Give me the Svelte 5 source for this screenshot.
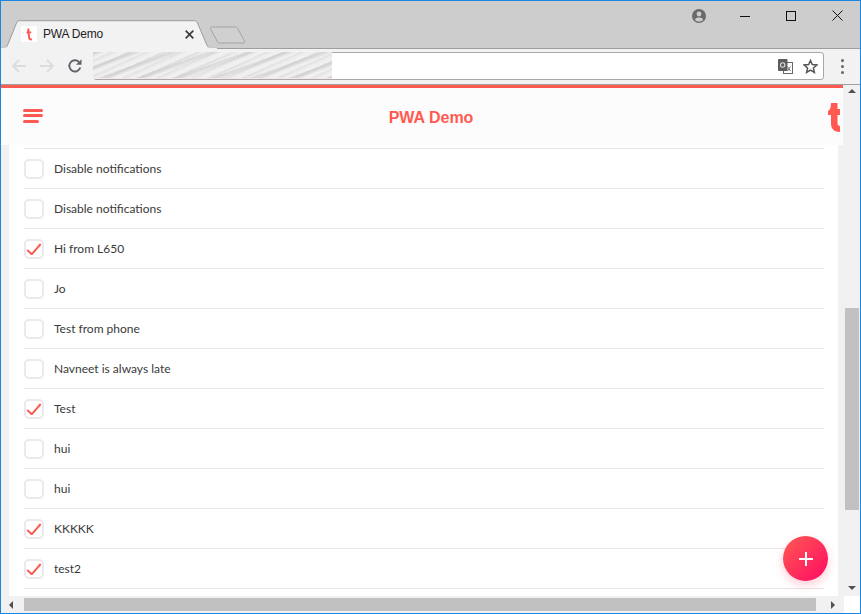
<script>
  const items = [
    ['Disable notifications', false],
    ['Disable notifications', false],
    ['Hi from L650', true],
    ['Jo', false],
    ['Test from phone', false],
    ['Navneet is always late', false],
    ['Test', true],
    ['hui', false],
    ['hui', false],
    ['KKKKK', true],
    ['test2', true]
  ];
</script>

<div class="window">
  <div class="titlebar">
    <div class="tab">
      <svg class="tab-shape" width="216" height="30" viewBox="0 0 216 30">
        <path d="M0 28.500h3.500c1.500 0 2.400-.8 3-2.200L15.500 4c.6-1.500 1.500-2.300 3-2.300h175c1.500 0 2.400.8 3 2.300l9.500 22.300c.6 1.400 1.500 2.200 3 2.200H216V30H0z" fill="#f2f2f2" stroke="#9c9c9c" stroke-width="1"/>
        <rect x="0" y="28.500" width="216" height="2" fill="#f2f2f2"/>
      </svg>
      <span class="favicon"><svg width="16" height="16" viewBox="0 0 16 16"><rect width="16" height="16" fill="#fff"/><path d="M6.500 2.500h1.800l.2 3h1.700v1.800H8.700l.4 4c.1 1 .8 1.300 1.800 1.200l.4 1.800c-2.400.4-3.900-.3-4.200-2.800L6.500 7.300H5.500v-1C6.300 5.400 6.500 4 6.500 2.500z" fill="#ff5a52"/></svg></span>
      <span class="tab-title">PWA Demo</span>
      <svg class="tab-x" width="9" height="9" viewBox="0 0 9 9"><path d="M.7.700l7.600 7.600M8.300.700L.7 8.300" stroke="#3c3c3c" stroke-width="1.700" fill="none"/></svg>
    </div>
    <svg class="newtab" width="36" height="18" viewBox="0 0 36 18"><path d="M1.500 1h24c1 0 1.500.4 2 1.200l7 13c.5 1 0 1.800-1 1.800h-24c-1 0-1.500-.4-2-1.200l-7-13C0 1.800.5 1 1.500 1z" fill="#d0d0d0" stroke="#a3a3a3"/></svg>
    <div class="spacer"></div>
    <svg class="profile" width="14" height="14" viewBox="0 0 14 14"><circle cx="7" cy="7" r="7" fill="#6a6a6a"/><circle cx="7" cy="5" r="2.400" fill="#cdcdcd"/><path d="M2.800 10.700C3.600 9 5.300 8.500 7 8.500s3.400.5 4.200 2.200C10.200 11.800 8.700 12.500 7 12.500s-3.200-.7-4.200-1.800z" fill="#cdcdcd"/></svg>
    <div class="winbtns">
      <svg width="10" height="10" viewBox="0 0 10 10"><path d="M0 5.500h10" stroke="#111" fill="none"/></svg>
      <svg width="10" height="10" viewBox="0 0 10 10"><rect x=".5" y=".5" width="9" height="9" stroke="#111" fill="none"/></svg>
      <svg width="11" height="11" viewBox="0 0 11 11"><path d="M.5.500l10 10M10.500.500l-10 10" stroke="#111" fill="none"/></svg>
    </div>
  </div>

  <div class="toolbar">
    <svg class="nav" width="16" height="16" viewBox="0 0 16 16"><path d="M15 8H2M8 2L2 8l6 6" stroke="#dcdcdc" stroke-width="1.800" fill="none"/></svg>
    <svg class="nav" width="16" height="16" viewBox="0 0 16 16"><path d="M1 8h13M8 2l6 6-6 6" stroke="#dcdcdc" stroke-width="1.800" fill="none"/></svg>
    <svg class="nav" width="16" height="16" viewBox="0 0 16 16"><path d="M13.300 9.500A5.600 5.600 0 1 1 12 4" stroke="#5f6368" stroke-width="1.900" fill="none"/><path d="M14.500 1.200v5.600H9z" fill="#5f6368"/></svg>
    <div class="omnibox">
      <div class="blur"><div class="streaks"></div></div>
      <div class="spacer"></div>
      <svg width="15" height="15" viewBox="0 0 15 15"><rect x="5.500" y="3.500" width="9" height="11" fill="#fff" stroke="#666" stroke-width="1"/><rect x="0" y="0" width="9.500" height="12" rx="1" fill="#5c5c5c"/><circle cx="4.700" cy="6" r="2.200" fill="none" stroke="#ddd" stroke-width="1.100"/><path d="M9.500 7.500l3 4.500M12.500 7.500L9.500 12" stroke="#777" stroke-width="1" fill="none"/></svg>
      <svg class="star" width="15" height="15" viewBox="0 0 15 15"><path d="M7.500 1.500l1.800 4.100 4.500.4-3.400 3 1 4.400-3.900-2.300-3.900 2.300 1-4.400-3.400-3 4.500-.4z" fill="none" stroke="#555" stroke-width="1.500"/></svg>
    </div>
    <div class="dots"><i></i><i></i><i></i></div>
  </div>

  <div class="viewport">
    <div class="page-row">
      <div class="page">
        <div class="accent"></div>
        <header>
          <div class="burger"><i></i><i></i><i class="short"></i></div>
          <div class="title">PWA Demo</div>
          <svg class="logo" width="12" height="29" viewBox="0 0 12 29"><path d="M3 0h6.500v6H12v6H9.500v8c0 2 1 3 2.500 3v6c-6 0-9-3-9-8.500V12H0V8C2 7 3 4 3 0z" fill="#ff5a52"/></svg>
        </header>
        <div class="list-wrap">
          <ul>
            {#each items as [label, done]}
              <li>
                <span class="check">
                  {#if done}
                    <svg width="16" height="12" viewBox="0 0 16 12"><path d="M1.300 7l4.400 4.300L14.700 1" stroke="#ff5a52" stroke-width="2" fill="none"/></svg>
                  {/if}
                </span>
                <span class="label">{label}</span>
              </li>
            {/each}
          </ul>
          <button class="fab" aria-label="Add">
            <svg width="16" height="16" viewBox="0 0 16 16"><path d="M8 1v14M1 8h14" stroke="#fff" stroke-width="2" fill="none"/></svg>
          </button>
        </div>
      </div>
      <div class="vscroll">
        <span class="arrow up"></span>
        <div class="vtrack"><div class="vthumb"></div></div>
        <span class="arrow down"></span>
      </div>
    </div>
    <div class="hscroll">
      <span class="arrow left"></span>
      <div class="hthumb"></div>
      <span class="arrow right"></span>
      <span class="corner"></span>
    </div>
  </div>
</div>

<style>
  :global(body) { margin: 0; }
  .window {
    width: 861px;
    height: 614px;
    box-sizing: border-box;
    border: 1px solid #1a86e0;
    display: flex;
    flex-direction: column;
    overflow: hidden;
    background: #cdcdcd;
    font-family: "Lato", "Liberation Sans", sans-serif;
  }
  .spacer { flex: 1; }

  .titlebar {
    height: 47px;
    flex: none;
    display: flex;
    align-items: flex-start;
    border-bottom: 1px solid #9e9e9e;
  }
  .tab {
    position: relative;
    width: 216px;
    height: 30px;
    margin-top: 18px;
    display: flex;
    align-items: center;
    z-index: 1;
  }
  .tab-shape { position: absolute; left: 0; top: 0; }
  .favicon { position: relative; margin-left: 20px; width: 16px; height: 16px; }
  .tab-title {
    position: relative;
    margin-left: 6px;
    font: 12px "Liberation Sans", Arial, sans-serif;
    letter-spacing: -0.2px;
    color: #222;
  }
  .tab-x { position: relative; margin-left: 82px; }
  .newtab { margin: 25px 0 0 -7px; }
  .profile { margin: 8px 34px 0 0; }
  .winbtns { display: flex; gap: 36px; margin: 9px 17px 0 0; align-items: center; }

  .toolbar {
    height: 36px;
    flex: none;
    box-sizing: border-box;
    background: #f2f2f2;
    display: flex;
    align-items: center;
    border-bottom: 1px solid #a0a0a0;
    padding: 0 0 1px 10px;
  }
  .nav { margin-right: 12px; }
  .omnibox {
    width: 731px;
    height: 28px;
    margin-left: -2px;
    box-sizing: border-box;
    background: #fff;
    border: 1px solid #a8a8a8;
    border-radius: 3px;
    display: flex;
    align-items: center;
    padding-right: 5px;
  }
  .blur {
    width: 239px;
    height: 27px;
    margin: -2px 0 0 -1px;
    overflow: hidden;
    background: #e9e9e9;
    border-bottom: 1px solid #f6e8e8;
    box-sizing: border-box;
  }
  .streaks {
    height: 100%;
    background:
      repeating-linear-gradient(160deg, rgba(200,200,200,.5) 0 2px, rgba(240,240,240,.4) 5px 9px, rgba(205,205,205,0) 13px),
      repeating-linear-gradient(156deg, rgba(190,190,190,.3) 0 1px, rgba(250,250,250,.4) 4px 7px);
    filter: blur(0.7px);
  }
  .star { margin-left: 10px; }
  .dots { display: flex; flex-direction: column; gap: 3px; margin-left: 17px; }
  .dots i { width: 3px; height: 3px; border-radius: 50%; background: #666; display: block; }

  .viewport { flex: 1; min-height: 0; display: flex; flex-direction: column; background: #f1f1f1; }
  .page-row { flex: 1; min-height: 0; display: flex; }
  .page { flex: 1; min-width: 0; display: flex; flex-direction: column; background: #f1f1f1; }
  .accent { height: 3px; background: #ff5a52; flex: none; }
  header {
    height: 57px;
    flex: none;
    background: #fcfcfc;
    display: flex;
    align-items: center;
    position: relative;
    overflow: hidden;
  }
  .burger { display: flex; flex-direction: column; gap: 2.5px; margin: 0 0 2px 22px; }
  .burger i { display: block; width: 20px; height: 3px; border-radius: 2px; background: #ff5a52; }
  .burger i.short { width: 16px; }
  .title {
    position: absolute;
    left: 18px;
    right: 0;
    text-align: center;
    font: 700 16px "Liberation Sans", Arial, sans-serif;
    color: #ff5a52;
    margin-top: 3px;
  }
  .logo { margin: 2px 3px 0 auto; flex: none; }

  .list-wrap {
    flex: 1;
    min-height: 0;
    position: relative;
    margin: 0 5px 0 8px;
    background: #fff;
    overflow: hidden;
  }
  ul { list-style: none; margin: 3px 14px 0 15px; padding: 0; border-bottom: 1px solid #e6e6e6; }
  li {
    height: 40px;
    box-sizing: border-box;
    border-top: 1px solid #e6e6e6;
    display: flex;
    align-items: center;
  }
  .check {
    width: 20px;
    height: 20px;
    box-sizing: border-box;
    border: 2px solid #e9e9ef;
    border-radius: 5px;
    background: #fff;
    display: flex;
    align-items: center;
    justify-content: center;
    margin-top: 1px;
  }
  .label { margin-left: 10px; font-size: 12px; color: #3a3a3a; }
  .fab {
    position: absolute;
    right: 10px;
    bottom: 15px;
    width: 45px;
    height: 45px;
    border: 0;
    padding: 0;
    border-radius: 50%;
    background: linear-gradient(135deg, #ff5a52, #ff0a64);
    box-shadow: 0 4px 10px rgba(255, 60, 90, .25);
    display: flex;
    align-items: center;
    justify-content: center;
  }

  .vscroll { width: 17px; flex: none; display: flex; flex-direction: column; background: #f1f1f1; align-items: center; }
  .vtrack { flex: 1; width: 100%; padding: 215px 1px 0 2px; box-sizing: border-box; }
  .vthumb { height: 202px; background: #c1c1c1; }
  .arrow { display: block; width: 0; height: 0; flex: none; }
  .arrow.up { margin-top: 4px; border: 4px solid transparent; border-top: 0; border-bottom: 4px solid #505050; }
  .arrow.down { margin-bottom: 6px; border: 4px solid transparent; border-bottom: 0; border-top: 4px solid #505050; }
  .hscroll { height: 17px; flex: none; display: flex; align-items: center; background: #f1f1f1; }
  .hthumb { width: 792px; height: 13px; margin-left: 11px; background: #c1c1c1; }
  .arrow.left { margin-left: 8px; border: 4px solid transparent; border-left: 0; border-right: 4px solid #505050; }
  .arrow.right { margin-left: 15px; border: 4px solid transparent; border-right: 0; border-left: 4px solid #505050; }
  .corner { width: 16px; height: 17px; margin-left: auto; background: #fff; }
</style>
